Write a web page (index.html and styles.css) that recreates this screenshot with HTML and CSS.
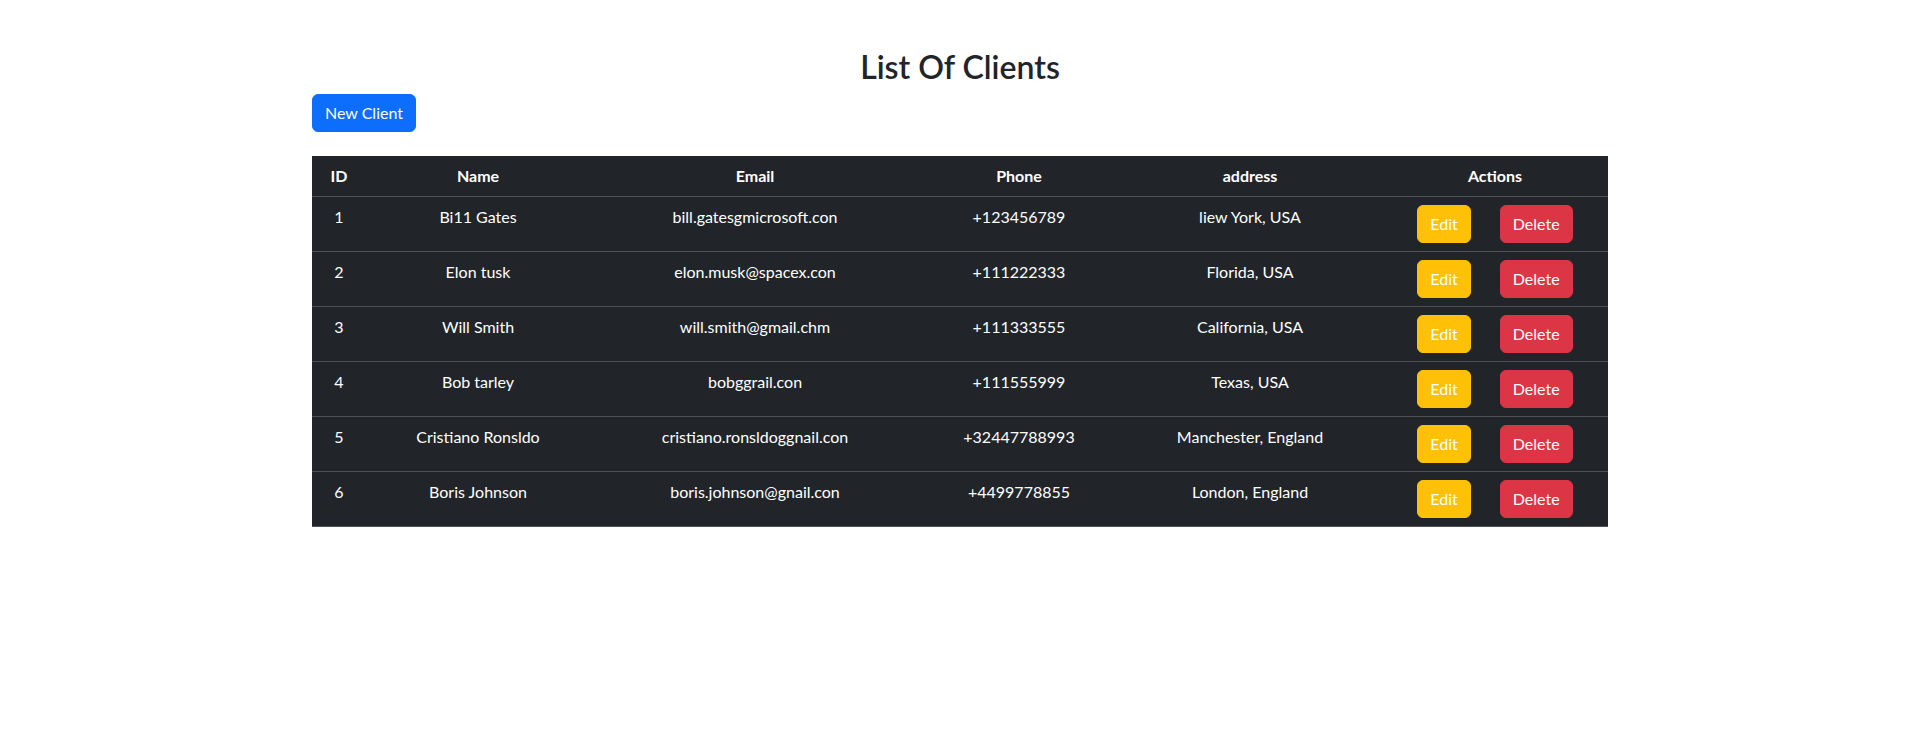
FILE: index.html
```html
<!DOCTYPE html>
<html lang="en">
<head>
<meta charset="utf-8">
<title>List Of Clients</title>
<link rel="stylesheet" href="styles.css">
</head>
<body>
<div class="page">
  <h2 class="title">List Of Clients</h2>
  <div class="toolbar"><a class="btn btn-primary" href="#">New Client</a></div>
  <table class="clients">
    <colgroup>
      <col class="c-id"><col class="c-name"><col class="c-email"><col class="c-phone"><col class="c-addr"><col class="c-act">
    </colgroup>
    <thead>
      <tr><th>ID</th><th>Name</th><th>Email</th><th>Phone</th><th>address</th><th>Actions</th></tr>
    </thead>
    <tbody>
      <tr><td>1</td><td>Bi11 Gates</td><td>bill.gatesgmicrosoft.con</td><td>+123456789</td><td>liew York, USA</td><td><div class="actions"><a class="btn btn-warning" href="#">Edit</a><a class="btn btn-danger" href="#">Delete</a></div></td></tr>
      <tr><td>2</td><td>Elon tusk</td><td>elon.musk@spacex.con</td><td>+111222333</td><td>Florida, USA</td><td><div class="actions"><a class="btn btn-warning" href="#">Edit</a><a class="btn btn-danger" href="#">Delete</a></div></td></tr>
      <tr><td>3</td><td>Will Smith</td><td>will.smith@gmail.chm</td><td>+111333555</td><td>California, USA</td><td><div class="actions"><a class="btn btn-warning" href="#">Edit</a><a class="btn btn-danger" href="#">Delete</a></div></td></tr>
      <tr><td>4</td><td>Bob tarley</td><td>bobggrail.con</td><td>+111555999</td><td>Texas, USA</td><td><div class="actions"><a class="btn btn-warning" href="#">Edit</a><a class="btn btn-danger" href="#">Delete</a></div></td></tr>
      <tr><td>5</td><td>Cristiano Ronsldo</td><td>cristiano.ronsldoggnail.con</td><td>+32447788993</td><td>Manchester, England</td><td><div class="actions"><a class="btn btn-warning" href="#">Edit</a><a class="btn btn-danger" href="#">Delete</a></div></td></tr>
      <tr><td>6</td><td>Boris Johnson</td><td>boris.johnson@gnail.con</td><td>+4499778855</td><td>London, England</td><td><div class="actions"><a class="btn btn-warning" href="#">Edit</a><a class="btn btn-danger" href="#">Delete</a></div></td></tr>
    </tbody>
  </table>
</div>
</body>
</html>
```
FILE: styles.css
```css
* { box-sizing: border-box; }
html, body { margin: 0; padding: 0; background: #fff; }
body {
  font-family: Lato, "Liberation Sans", sans-serif;
  font-size: 16px;
  line-height: 1.5;
  color: #212529;
}
.page {
  max-width: 1296px;
  margin: 48px auto;
}
.title {
  margin: 0 0 8px;
  text-align: center;
  font-size: 32px;
  font-weight: 600;
  line-height: 38.4px;
  color: #212529;
}
.toolbar { margin-bottom: 24px; }
.btn {
  display: inline-block;
  padding: 6px 12px;
  font-size: 16px;
  line-height: 24px;
  border: 1px solid transparent;
  border-radius: 6px;
  color: #fff;
  text-decoration: none;
  text-align: center;
  vertical-align: middle;
}
.btn-primary { background: #0d6efd; border-color: #0d6efd; }
.btn-warning { background: #ffc107; border-color: #ffc107; color: #fff; }
.btn-danger { background: #dc3545; border-color: #dc3545; }
.clients {
  width: 100%;
  table-layout: fixed;
  border-collapse: collapse;
  background: #212529;
  color: #fff;
  vertical-align: top;
}
.c-id { width: 54px; }
.c-name { width: 224px; }
.c-email { width: 330px; }
.c-phone { width: 198px; }
.c-addr { width: 264px; }
.c-act { width: 226px; }
.clients th, .clients td {
  padding: 8px;
  text-align: center;
  border-bottom: 1px solid #4d5154;
  vertical-align: top;
}
.clients th { font-weight: 700; }
.actions {
  display: flex;
  justify-content: center;
  gap: 29px;
}
```
